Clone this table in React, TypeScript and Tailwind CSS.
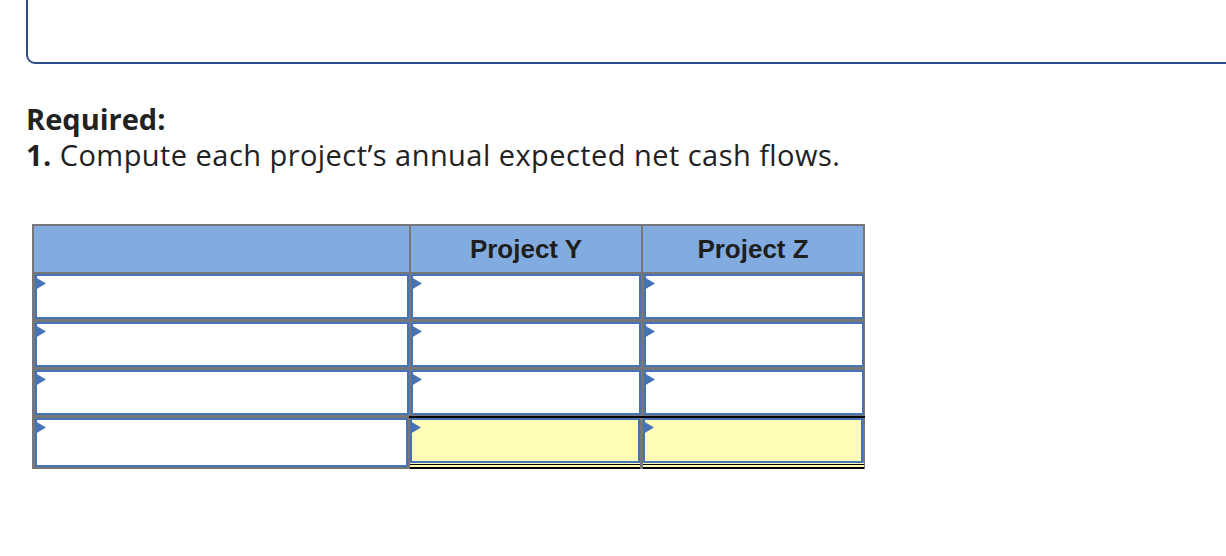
import React from "react";

const BLUE = "border-[#4672b6]";

function Flag() {
  return (
    <svg
      className="absolute left-[-2px] top-[1px]"
      width="11"
      height="13"
      viewBox="0 0 11 13"
    >
      <polygon points="0,0 11,6.5 0,13" fill="#4672b6" />
    </svg>
  );
}

function Cell({ w, h = 45, yellow = false }: { w: string; h?: number; yellow?: boolean }) {
  return (
    <div
      className={`relative border-2 ${BLUE} ${w} ${yellow ? "bg-[#fffdb8]" : "bg-white"}`}
      style={{ height: h }}
    >
      <Flag />
    </div>
  );
}

function Row() {
  return (
    <div className="flex h-[45px] pl-[3px] pr-[1px]">
      <Cell w="w-[374px]" />
      <div className="w-[2px]" />
      <Cell w="w-[230px]" />
      <div className="w-[3px]" />
      <Cell w="w-[220px]" />
    </div>
  );
}

export default function App() {
  return (
    <div className="relative h-[556px] w-full overflow-hidden bg-white">
      <div className="-mt-[20px] ml-[26px] h-[84px] w-[1300px] rounded-[9px] border-2 border-[#2a4d85]" />
      <div
        className="ml-[26px] mt-[37px] text-[#222] text-[29px] leading-[36px] tracking-[0.45px]"
        style={{ fontFamily: "'Open Sans', Lato, sans-serif" }}
      >
        <div className="font-bold tracking-[0px]">Required:</div>
        <div>
          <span className="font-bold">1.</span> Compute each project’s annual expected net cash flows.
        </div>
      </div>

      <div className="ml-[32px] mt-[51px] w-[833px] bg-[#777777]">
        <div
          className="flex h-[50px] px-[2px] pt-[2px] pb-[2px] text-[26px] font-bold text-[#1e1e1e]"
          style={{ fontFamily: "'Liberation Sans', Arial, sans-serif" }}
        >
          <div className="w-[375px] bg-[#82abdf]" />
          <div className="w-[2px]" />
          <div className="flex w-[230px] items-center justify-center bg-[#82abdf]">Project Y</div>
          <div className="w-[2px]" />
          <div className="flex w-[220px] items-center justify-center bg-[#82abdf]">Project Z</div>
        </div>
        <Row />
        <div className="h-[3px]" />
        <Row />
        <div className="h-[3px]" />
        <Row />
        <div className="flex h-[3px] pl-[3px]">
          <div className="w-[374px]" />
          <div className="h-[2px] w-[456px] mt-[1px] bg-black" />
        </div>
        <div className="flex h-[51px] items-start pl-[3px] pr-[1px]">
          <Cell w="w-[374px]" h={49} />
          <div className="w-[2px]" />
          <div className="flex flex-col">
            <Cell w="w-[230px]" h={45} yellow />
            <div className="h-[6px] w-[230px] bg-[#fffdb8] border-t-[1px] border-t-[#fffdb8]">
              <div className="h-[1px] bg-black" />
              <div className="h-[2px]" />
              <div className="h-[2px] bg-black" />
            </div>
          </div>
          <div className="w-[3px] h-[45px]" />
          <div className="flex flex-col">
            <Cell w="w-[220px]" h={45} yellow />
            <div className="h-[6px] w-[221px] bg-[#fffdb8] border-t-[1px] border-t-[#fffdb8]">
              <div className="h-[1px] bg-black" />
              <div className="h-[2px]" />
              <div className="h-[2px] bg-black" />
            </div>
          </div>
        </div>
      </div>
    </div>
  );
}
